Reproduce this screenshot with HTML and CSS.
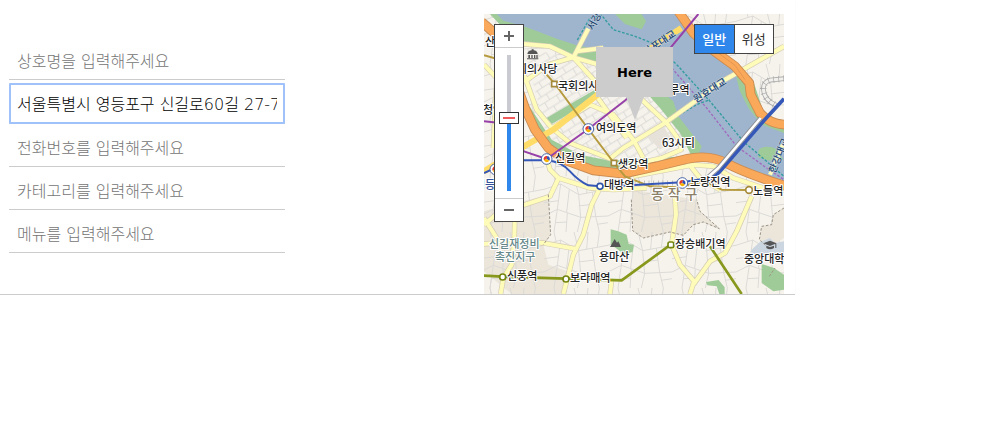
FILE: index.html
```
<!DOCTYPE html>
<html lang="ko">
<head>
<meta charset="utf-8">
<meta name="viewport" content="width=device-width, initial-scale=1">
<title>상점 등록</title>
<link rel="stylesheet" href="styles.css">
</head>
<body>
<main class="panel">
  <form class="fields">
    <input class="field" type="text" aria-label="상호명" placeholder="상호명을 입력해주세요">
    <input class="field field-active" type="text" aria-label="주소" value="서울특별시 영등포구 신길로60길 27-7">
    <input class="field" type="text" aria-label="전화번호" placeholder="전화번호를 입력해주세요">
    <input class="field" type="text" aria-label="카테고리" placeholder="카테고리를 입력해주세요">
    <input class="field" type="text" aria-label="메뉴" placeholder="메뉴를 입력해주세요">
  </form>
  <section class="map" aria-label="지도">
    <svg class="map-canvas" viewBox="0 0 300 280" preserveAspectRatio="xMidYMid slice">
      <defs>
        <pattern id="lots" width="192" height="168" patternUnits="userSpaceOnUse">
          <path class="lot" d="M0 40L50 24L104 56L192 40M50 24L40 100L0 120M40 100L110 124L104 56M110 124L192 120M110 124L100 168M40 100L30 168M90 0L104 56M30 0L36 28M145 48L155 121M155 121L166 168M166 0L160 46M70 111L66 168M76 40L68 108M104 90L150 84M0 80L44 74M34 140L68 138M160 145L192 140M128 52L132 0"/>
        </pattern>
        <pattern id="blocks" width="42" height="42" patternUnits="userSpaceOnUse" patternTransform="rotate(-32)">
          <path class="lot" d="M0 8H42M0 30H42M14 8V30M32 30V50M32 0V8"/>
        </pattern>
        <g id="transfer">
          <circle r="16" fill="#fff" stroke="#4965a8" stroke-width="3"/>
          <path d="M0 0L-8 4A9 9 0 0 1 2-9Z" fill="#e33b2d"/>
          <path d="M0 0L2-9A9 9 0 0 1 8 5Z" fill="#2f4fb5"/>
          <path d="M0 0L8 5A9 9 0 0 1-8 4Z" fill="#f5b400"/>
        </g>
      </defs>
      <g transform="scale(.333333) translate(-12 -18)">
        <rect x="12" y="18" width="900" height="840" fill="#f6f3ec"/>
        <rect x="12" y="18" width="900" height="840" fill="url(#lots)"/>
        <!-- shaded districts -->
        <path class="district" d="M12 610L95 585L135 578L205 560L212 680L190 710L205 770L262 790L258 858H95L12 790Z"/>
        <path class="district" d="M456 545L650 575L660 610L718 662L670 642L640 650L610 682L570 672L490 690L458 668Z"/>
        <path class="district" d="M912 600L880 620L875 650L845 655L838 695L860 715L885 708L912 690Z"/>
        <path d="M820 720L840 702L870 690L885 705L912 700V765L882 762L868 745L830 745L812 730Z" fill="#ccd6e1"/>
        <path fill="url(#lots)" d="M12 610L205 560L212 680L190 710L205 770L262 790V858H12ZM456 545L650 575L670 642L610 682L490 690L458 668Z"/>
        <!-- Yeouido blocks -->
        <path d="M132 120L280 150L410 190L560 290L640 440L560 455L420 480L270 445L200 380Z" fill="#f6f3ec"/>
        <path d="M132 120L280 150L410 190L560 290L640 440L560 455L420 480L270 445L200 380Z" fill="url(#blocks)"/>
        <path d="M497 378L545 345L578 400L540 425Z" fill="#e6e1d9"/>
        <!-- river -->
        <path d="M45 18H600L650 80L740 150L800 220L812 290L860 345L912 360V530L800 490L700 448L660 440L625 375L560 280L480 215L350 130L240 105L130 75L60 35Z" fill="#9fb5cd"/>
        <path class="green" d="M50 18L70 38L140 58L230 92L290 112L350 124L450 180L500 215L470 225L350 166L280 142L225 125L130 100L60 50L30 18Z"/>
        <path class="green" d="M500 215L580 280L595 325L665 415L655 440L635 445L600 375L540 300L500 255Z"/>
        <path class="green" d="M405 18L435 48L485 64L498 40L484 18Z"/>
        <path class="green" d="M765 190L778 245L805 300L845 350L912 375V350L850 310L820 220Z"/>
        <path class="green" d="M835 428Q850 408 890 422L910 455L870 458L835 448Z"/>
        <path class="green" d="M132 270L165 320L215 395L300 440L390 458L590 446L610 460L440 500L290 475L190 420L132 310Z"/>
        <path class="green" d="M200 330L285 280L345 245L350 270L215 348Z"/>
        <path class="green" d="M392 664L415 670L440 680L446 708L462 710L458 732L432 738L410 722L392 708Z"/>
        <path class="green" d="M845 768L882 780L912 800V845L880 850L845 825Z"/>
        <path class="green" d="M678 822L716 816L734 838V858H718L710 835L682 832Z"/>
        <!-- ferry routes -->
        <g fill="none" stroke-width="4" stroke-dasharray="8 5">
          <path d="M292 96L330 30L365 22L400 65L465 85L530 110L595 175L690 280L790 400L912 505" stroke="#319b9e"/>
          <path d="M575 180L680 300L770 415L860 480L912 515" stroke="#a26abf"/>
          <path d="M596 322L650 290L690 275" stroke="#319b9e"/>
        </g>
        <!-- minor roads -->
        <g class="casing">
          <path id="r1" d="M132 108L210 115L280 148L350 168L420 205L480 270L560 345L600 400L604 425L545 450L420 478"/>
          <path id="r2" d="M282 145L325 62"/>
          <path id="r3" d="M132 222L205 170L280 148L345 220"/>
          <path id="r4" d="M132 200L170 305L215 360L270 405L390 452L430 420L555 345L735 215L912 115"/>
          <path id="r5" d="M215 360L330 290L400 320L460 395L490 450"/>
          <path id="r6" d="M350 265L440 390M290 130L370 120"/>
          <path id="r7" d="M200 450L210 485L235 510L330 540L400 545L500 540"/>
          <path id="r8" d="M365 530L335 590L310 680L280 740L265 800L250 858"/>
          <path id="r9" d="M12 650L60 610L135 590L210 565L235 512"/>
          <path id="r10" d="M12 708L110 700L190 705L285 722M105 600L103 690L95 770L70 810L62 858"/>
          <path id="r11" d="M583 540L588 620L575 710L600 770L642 820L630 858"/>
          <path id="r12" d="M640 830L690 760L735 735L770 670L815 565"/>
          <path id="r13" d="M620 460L660 510L720 545M460 505L640 470L700 475L760 510L850 540"/>
          <path id="r14" d="M12 170L50 210L40 420M12 630L50 690M390 858L395 815"/>
        </g>
        <g class="road">
          <use href="#r1"/><use href="#r2"/><use href="#r3"/><use href="#r4"/><use href="#r5"/>
          <use href="#r6"/><use href="#r7"/><use href="#r8"/><use href="#r9"/><use href="#r10"/>
          <use href="#r11"/><use href="#r12"/><use href="#r13"/><use href="#r14"/>
        </g>
        <path d="M870 500L908 410" class="road"/>
        <path d="M12 490L132 415L220 365L350 262L520 115L604 60" fill="none" stroke="#ffdb68" stroke-width="18"/>
        <!-- expressways -->
        <g class="express-edge">
          <path id="e1" d="M5 42L60 90L135 300L165 365L205 420L260 458L340 487L430 497L530 475L620 453Q690 438 740 466T920 535"/>
          <path id="e2" d="M595 10L640 75L690 120L765 175L808 225L812 260L840 315Q870 350 920 350"/>
        </g>
        <g class="express"><use href="#e1"/><use href="#e2"/></g>
        <path d="M650 80L700 124L765 172L795 215" fill="none" stroke="#d98d4b" stroke-width="2"/>
        <!-- stadium rail loop -->
        <g fill="none">
          <path d="M912 212L872 216Q850 222 850 242Q852 278 890 292" stroke="#aaa" stroke-width="14"/>
          <path d="M912 212L872 216Q850 222 850 242Q852 278 890 292" stroke="#f2f0ec" stroke-width="9"/>
          <path d="M912 212L872 216Q850 222 850 242Q852 278 890 292" stroke="#aaa" stroke-width="20" stroke-dasharray="2 13"/>
        </g>
        <!-- district edges -->
        <g fill="none" stroke="#9b9387" stroke-width="3" stroke-dasharray="8 5">
          <path d="M205 560L212 680L190 710"/>
          <path d="M454 575L458 668L490 690L570 672L610 682L640 650L670 642L718 662L660 610L650 575"/>
          <path d="M912 600L880 620L875 650L845 655L838 695L860 715M868 805L885 780"/>
        </g>
        <!-- subway lines -->
        <g fill="none" stroke-width="6" stroke-linejoin="round">
          <path d="M450 525H600" stroke="#aaa" stroke-width="15" stroke-dasharray="2 12"/>
          <path d="M12 142L60 155M200 200L225 228L325 363L402 465L435 505L510 535L590 538L675 520L725 545L805 546" stroke="#b69a3e"/>
          <path d="M12 340L60 345L132 430L200 453L325 363L438 275L575 115L655 18" stroke="#9640a8"/>
          <path d="M12 495L45 480L132 457H200Q245 462 270 490T325 532L360 535L450 532L607 523L700 508" stroke="#3558b8"/>
          <path d="M665 519Q700 514 720 490L850 340L912 272" stroke="#3558b8" stroke-width="11"/>
          <path d="M675 515L715 480L842 330" stroke="#8d9198" stroke-width="13"/>
          <path d="M675 515L715 480L842 330" stroke="#fff" stroke-width="8"/>
          <path d="M12 803L68 806L258 812L425 817L572 710M690 715L785 858" stroke="#87981c" stroke-width="8"/>
        </g>
        <g fill="#fff" stroke-width="5">
          <path d="M215 220H231V236H215ZM394 457H410V473H394Z" stroke="#a68a3b"/>
          <circle cx="807" cy="546" r="10" stroke="#a68a3b"/>
          <circle cx="360" cy="535" r="9" stroke="#3055a8"/>
          <circle cx="68" cy="807" r="9" stroke="#738510"/>
          <circle cx="258" cy="813" r="9" stroke="#738510"/>
          <rect x="564" y="702" width="17" height="17" rx="5" stroke="#738510"/>
        </g>
        <use href="#transfer" x="325" y="363"/><use href="#transfer" x="200" y="453"/>
        <use href="#transfer" x="607" y="525"/><use href="#transfer" x="46" y="484"/>
        <!-- landmarks -->
        <g fill="#555">
          <path d="M142 138Q144 127 155 127V124H161V127Q171 127 173 138ZM145 141H150V150H145ZM154 141H158V150H154ZM162 141H166V150H162ZM169 141H173V150H169ZM141 151H175V154H141Z"/>
          <path d="M390 717L404 693L411 704L415 700L423 717Z"/>
          <path d="M850 706L870 698L890 706L870 714ZM859 713L870 717L882 713V720Q870 727 859 720ZM886 707H889V720H886Z"/>
        </g>
      </g>
      <g class="label">
        <text x="1" y="32">산</text>
        <text x="33" y="59">회의사당</text>
        <text x="74" y="76">국회의사당역</text>
        <text x="-1" y="100">청역</text>
        <text x="112" y="118">여의도역</text>
        <text x="155" y="80">여의나루역</text>
        <text x="71" y="148">신길역</text>
        <text x="134" y="154">샛강역</text>
        <text x="120" y="175">대방역</text>
        <text x="178" y="133">63시티</text>
        <text x="206" y="172">노량진역</text>
        <text x="269" y="181">노들역</text>
        <text x="191" y="234">장승배기역</text>
        <text x="115" y="247">용마산</text>
        <text x="260" y="249">중앙대학교</text>
        <text x="23" y="266">신풍역</text>
        <text x="86" y="268">보라매역</text>
        <text class="label-line" x="-9" y="175">영등</text>
        <text class="label-area" x="5" y="234">신길재정비</text>
        <text class="label-area" x="11" y="247">촉진지구</text>
        <text class="label-gu" x="167" y="185">동 작 구</text>
        <g class="label-bridge">
          <text transform="translate(109 17) rotate(-62)">서강대교</text>
          <text transform="translate(162 42) rotate(-34)">마포대교</text>
          <text transform="translate(212 89) rotate(-32)">원효대교</text>
          <text transform="translate(291 160) rotate(-68)">한강대교</text>
        </g>
      </g>
    </svg>
    <div class="zoom-control">
      <button class="zoom-button zoom-in" type="button" aria-label="확대"><svg viewBox="0 0 10 10"><path d="M0 5H10M5 0V10"/></svg></button>
      <input class="zoom-range" type="range" min="0" max="100" value="54" aria-label="지도 확대 수준">
      <button class="zoom-button zoom-out" type="button" aria-label="축소"><svg viewBox="0 0 10 10"><path d="M0 5H10"/></svg></button>
    </div>
    <div class="type-control">
      <button class="type-button type-selected" type="button">일반</button>
      <button class="type-button" type="button">위성</button>
    </div>
    <div class="marker">Here</div>
  </section>
</main>
</body>
</html>
```
FILE: styles.css
```
* { box-sizing: border-box; }
body {
  margin: 0;
  background: #fff;
  font-family: "Noto Sans", "Noto Sans CJK KR", sans-serif;
}
.panel {
  display: flex;
  justify-content: space-between;
  gap: 16px;
  max-width: 795px;
  padding: 14px 11px 0 9px;
  border-bottom: 1px solid #ccc;
  box-shadow: 0 1px 1px #eee;
}
.fields {
  display: flex;
  flex-direction: column;
  gap: 3px;
  flex: 0 1 276px;
  min-width: 0;
  padding-top: 26px;
}
.field {
  width: 100%;
  height: 40px;
  padding: 4px 8px 0;
  border: 0;
  border-bottom: 1px solid #ccc;
  background: #fff;
  color: #000;
  font-family: "DejaVu Sans", "Noto Sans CJK KR", sans-serif;
  font-size: 16px;
  font-weight: 300;
}
.field::placeholder { color: #757575; opacity: 1; }
.field-active {
  height: 41px;
  padding-top: 0;
}
.field-active,
.field:focus {
  outline: 2px solid #a0c2fa;
  outline-offset: -2px;
  border-radius: 1px;
}
.map {
  position: relative;
  flex: 0 1 300px;
  height: 280px;
  overflow: hidden;
}
.map-canvas { display: block; width: 100%; height: 100%; }
.lot { fill: none; stroke: #dcdad7; stroke-width: 3; }
.district { fill: #ebe5da; }
.green { fill: #9fcb98; }
.casing, .road { fill: none; stroke-linejoin: round; }
.casing { stroke: #d5cdb5; stroke-width: 16; }
.road { stroke: #fffbb9; stroke-width: 12; }
.express-edge, .express { fill: none; stroke-linejoin: round; }
.express-edge { stroke: #c98b52; stroke-width: 29; }
.express { stroke: #faa85a; stroke-width: 24; }
.label {
  fill: #222;
  stroke: #fff;
  stroke-width: 2px;
  stroke-linejoin: round;
  paint-order: stroke;
  font-family: "Noto Sans CJK KR", sans-serif;
  font-size: 11px;
  font-weight: 500;
}
.label-line { fill: #33509a; }
.label-area { fill: #66888a; }
.label-gu { fill: #8c8069; font-size: 14px; }
.label-bridge { fill: #24466f; stroke: #c4d3e2; stroke-width: 1px; font-size: 10px; }
.zoom-control {
  position: absolute;
  top: 10px;
  left: 10px;
  display: flex;
  flex-direction: column;
  align-items: center;
  width: 30px;
  height: 198px;
  border: 1px solid #444;
  background: #fff;
}
.zoom-button {
  display: grid;
  place-items: center;
  width: 100%;
  height: 23px;
  padding: 0;
  border: 0;
  background: #fff;
}
.zoom-in { border-bottom: 1px solid #ccc; }
.zoom-out { border-top: 1px solid #ccc; }
.zoom-button svg { width: 10px; height: 10px; fill: none; stroke: #666; stroke-width: 2; }
.zoom-range {
  appearance: none;
  writing-mode: vertical-lr;
  direction: rtl;
  width: 20px;
  height: 136px;
  margin: 7px 0;
  background: linear-gradient(#c9cbd0 46%, #2f87ec 46%) center / 4px 100% no-repeat;
}
.zoom-range::-webkit-slider-thumb {
  appearance: none;
  width: 20px;
  height: 12px;
  border: 1px solid #333;
  background: linear-gradient(#f15b5b, #f15b5b) center / 12px 2px no-repeat #fff;
}
.type-control {
  position: absolute;
  top: 10px;
  right: 10px;
  display: flex;
  width: 80px;
  height: 30px;
  border: 1px solid #444;
  background: #fff;
}
.type-button {
  flex: 1;
  padding: 0 0 2px;
  border: 0;
  background: #fff;
  color: #333;
  font-family: "Noto Sans CJK KR", sans-serif;
  font-size: 13px;
}
.type-selected {
  border-right: 1px solid #444;
  background: #2f87ec;
  color: #fff;
  font-weight: 500;
}
.marker {
  position: absolute;
  top: 33px;
  left: 112px;
  display: grid;
  place-items: center;
  width: 77px;
  height: 50px;
  background: #ccc;
  color: #000;
  font: bold 13px "DejaVu Sans", sans-serif;
}
.marker::after {
  content: "";
  position: absolute;
  top: 100%;
  left: 50%;
  margin-left: -9px;
  border: 9px solid transparent;
  border-top: 23px solid #ccc;
  border-bottom: 0;
}
```
